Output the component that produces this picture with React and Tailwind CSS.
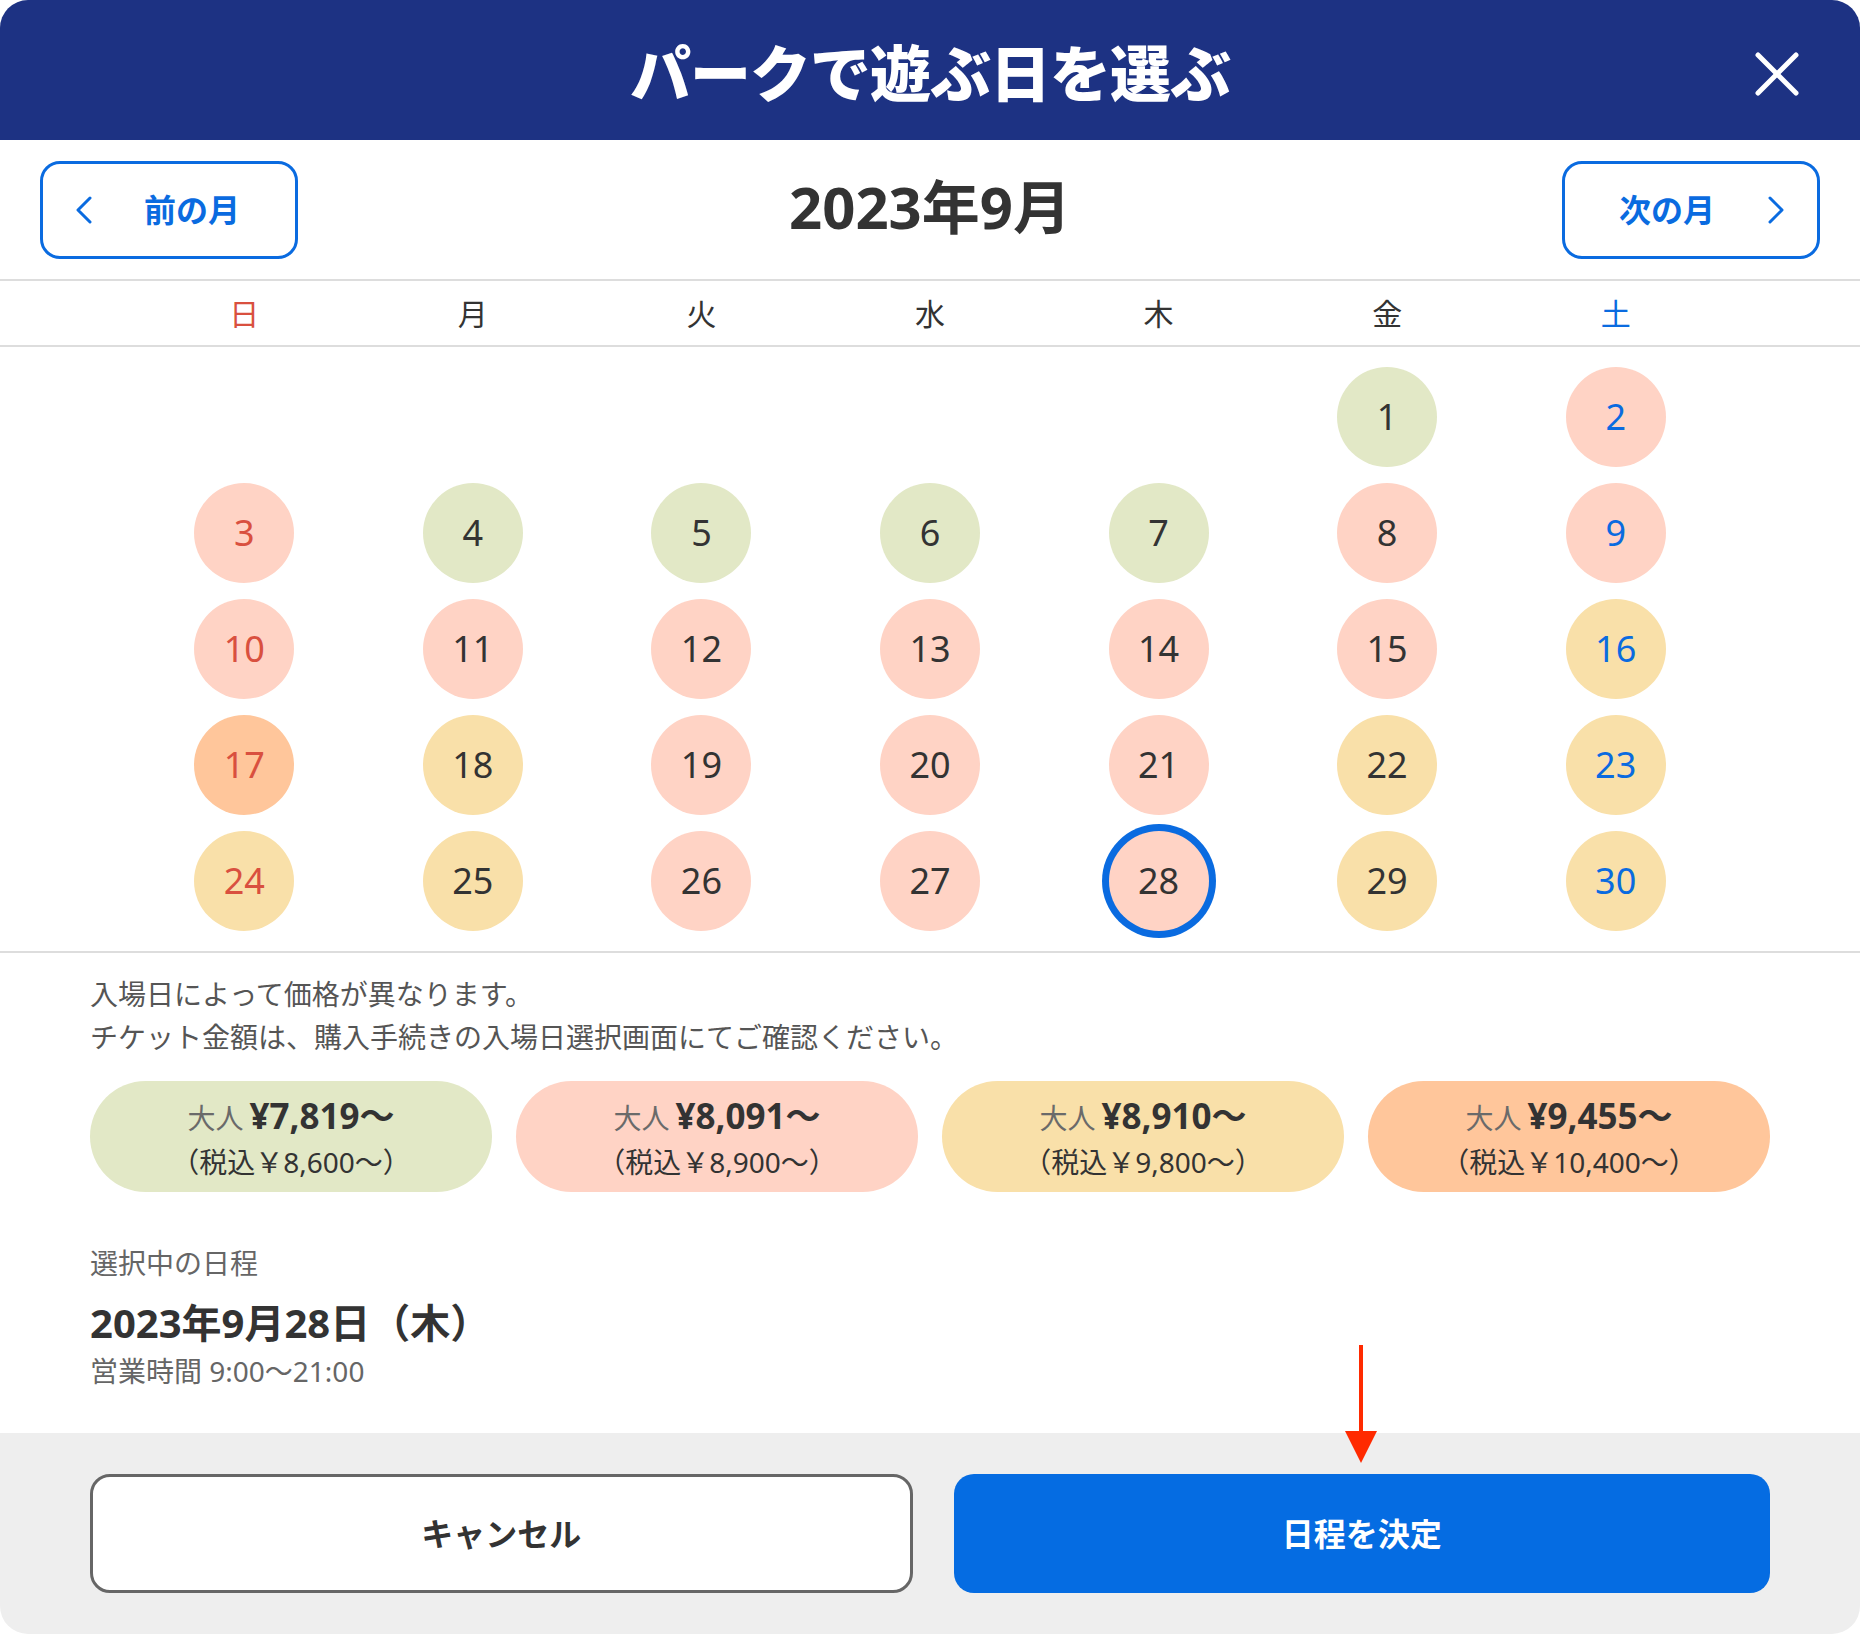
import React from 'react';

const fills = {
  g: 'bg-[#e2e8c6]',
  p: 'bg-[#ffd3c5]',
  y: 'bg-[#f9e0a9]',
  o: 'bg-[#ffc69b]',
};

const weekdays = ['日', '月', '火', '水', '木', '金', '土'];

const weeks = [
  [null, null, null, null, null, [1, 'g'], [2, 'p']],
  [[3, 'p'], [4, 'g'], [5, 'g'], [6, 'g'], [7, 'g'], [8, 'p'], [9, 'p']],
  [[10, 'p'], [11, 'p'], [12, 'p'], [13, 'p'], [14, 'p'], [15, 'p'], [16, 'y']],
  [[17, 'o'], [18, 'y'], [19, 'p'], [20, 'p'], [21, 'p'], [22, 'y'], [23, 'y']],
  [[24, 'y'], [25, 'y'], [26, 'p'], [27, 'p'], [28, 'p'], [29, 'y'], [30, 'y']],
];

const prices = [
  { price: '¥7,819〜', tax: '（税込￥8,600〜）', color: 'bg-[#e2e8c6]' },
  { price: '¥8,091〜', tax: '（税込￥8,900〜）', color: 'bg-[#ffd3c5]' },
  { price: '¥8,910〜', tax: '（税込￥9,800〜）', color: 'bg-[#f9e0a9]' },
  { price: '¥9,455〜', tax: '（税込￥10,400〜）', color: 'bg-[#ffc69b]' },
];

function dayColor(col) {
  if (col === 0) return 'text-[#d9503f]';
  if (col === 6) return 'text-[#0a6be0]';
  return 'text-[#333333]';
}

function Chevron({ dir }) {
  return (
    <svg width="18" height="28" viewBox="0 0 18 28" fill="none">
      <polyline
        points={dir === 'left' ? '15,2 3,14 15,26' : '3,2 15,14 3,26'}
        stroke="#0a6be0"
        strokeWidth="3"
        strokeLinecap="round"
        strokeLinejoin="round"
      />
    </svg>
  );
}

function DayCell({ day, col }) {
  if (!day) return <div className="h-[100px]" />;
  const [num, fill] = day;
  const selected = num === 28;
  return (
    <div className="flex justify-center">
      <div
        className={
          'w-[100px] h-[100px] rounded-full flex items-center justify-center text-[36px] ' +
          fills[fill] + ' ' + dayColor(col) +
          (selected ? ' ring-[7px] ring-[#0a6be0]' : '')
        }
      >
        {num}
      </div>
    </div>
  );
}

export default function App() {
  return (
    <div className="relative w-full h-[1634px] bg-white [font-family:'Noto_Sans','Noto_Sans_CJK_JP',sans-serif]">
      <div className="h-full rounded-[28px] overflow-hidden flex flex-col bg-white">
        {/* header */}
        <div className="h-[140px] bg-[#1d3283] relative flex items-center justify-center shrink-0">
          <h1 className="text-white text-[61px] font-black tracking-[-1px] leading-none [font-family:'Noto_Sans_CJK_JP',sans-serif]">パークで遊ぶ日を選ぶ</h1>
          <button className="absolute right-[61px] top-[52px] w-[44px] h-[44px]">
            <svg width="44" height="44" viewBox="0 0 44 44">
              <line x1="3" y1="3" x2="41" y2="41" stroke="white" strokeWidth="5" strokeLinecap="round" />
              <line x1="41" y1="3" x2="3" y2="41" stroke="white" strokeWidth="5" strokeLinecap="round" />
            </svg>
          </button>
        </div>

        {/* month nav */}
        <div className="h-[141px] border-b-2 border-[#dddddd] px-[40px] flex items-center justify-between shrink-0">
          <button className="w-[258px] h-[98px] border-[3px] border-[#0a6be0] rounded-[20px] flex items-center pl-[32px]">
            <Chevron dir="left" />
            <span className="ml-[51px] text-[32px] font-bold text-[#0a6be0]">前の月</span>
          </button>
          <div className="mb-[6px] text-[58px] font-bold text-[#333333] leading-none">2023年9月</div>
          <button className="w-[258px] h-[98px] border-[3px] border-[#0a6be0] rounded-[20px] flex items-center pl-[54px]">
            <span className="text-[32px] font-bold text-[#0a6be0]">次の月</span>
            <span className="ml-[52px]"><Chevron dir="right" /></span>
          </button>
        </div>

        {/* weekdays */}
        <div className="h-[66px] border-b-2 border-[#dddddd] px-[130px] grid grid-cols-7 items-center shrink-0">
          {weekdays.map((w, i) => (
            <div key={w} className={'text-center text-[30px] ' + dayColor(i)}>{w}</div>
          ))}
        </div>

        {/* calendar */}
        <div className="border-b-2 border-[#dddddd] px-[130px] pt-[20px] pb-[20px] grid grid-cols-7 gap-y-[16px] shrink-0">
          {weeks.map((week, r) =>
            week.map((d, c) => <DayCell key={r + '-' + c} day={d} col={c} />)
          )}
        </div>

        {/* info */}
        <div className="flex-1 px-[90px] pt-[20px]">
          <p className="text-[28px] leading-[43px] text-[#555555]">入場日によって価格が異なります。</p>
          <p className="text-[28px] leading-[43px] text-[#555555]">チケット金額は、購入手続きの入場日選択画面にてご確認ください。</p>
          <div className="mt-[22px] grid grid-cols-4 gap-[24px]">
            {prices.map((p) => (
              <div key={p.price} className={'h-[111px] pt-[7px] rounded-full flex flex-col items-center justify-center ' + p.color}>
                <div className="flex items-baseline leading-[42px]">
                  <span className="text-[28px] text-[#6a6a6a] mr-[6px]">大人</span>
                  <span className="text-[35px] font-bold text-[#333333]">{p.price}</span>
                </div>
                <div className="text-[28px] leading-[46px] text-[#333333]">{p.tax}</div>
              </div>
            ))}
          </div>
          <p className="mt-[52px] text-[28px] leading-[38px] text-[#666666]">選択中の日程</p>
          <p className="mt-[16px] text-[40px] leading-[50px] font-bold text-[#333333]">2023年9月28日（木）</p>
          <p className="mt-[4px] text-[28px] leading-[38px] text-[#666666]">営業時間 9:00〜21:00</p>
        </div>

        {/* footer */}
        <div className="h-[201px] bg-[#eeeeee] px-[90px] flex items-center gap-[41px] shrink-0">
          <button className="flex-1 h-[119px] bg-white border-[3px] border-[#666666] rounded-[20px] text-[32px] font-bold text-[#333333]">
            キャンセル
          </button>
          <button className="flex-1 h-[119px] bg-[#056ce2] rounded-[20px] text-[32px] font-bold text-white">
            日程を決定
          </button>
        </div>
      </div>

      {/* annotation arrow */}
      <svg className="absolute left-[1345px] top-[1345px]" width="32" height="118" viewBox="0 0 32 118">
        <rect x="14" y="0" width="4" height="90" fill="#ff2a00" />
        <polygon points="0,86 32,86 16,118" fill="#ff2a00" />
      </svg>
    </div>
  );
}
